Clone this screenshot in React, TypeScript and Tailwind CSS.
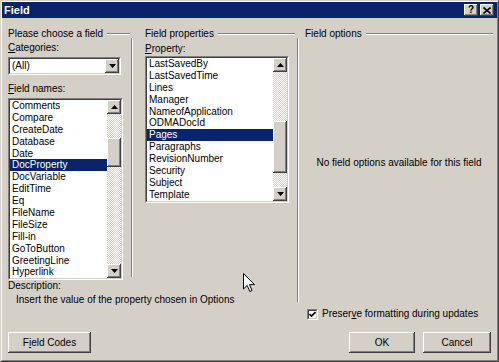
import React from 'react';

const fieldNames = [
    'Comments', 'Compare', 'CreateDate', 'Database', 'Date', 'DocProperty', 'DocVariable',
    'EditTime', 'Eq', 'FileName', 'FileSize', 'Fill-in', 'GoToButton', 'GreetingLine', 'Hyperlink',
];

const properties = [
    'LastSavedBy', 'LastSavedTime', 'Lines', 'Manager', 'NameofApplication', 'ODMADocId',
    'Pages', 'Paragraphs', 'RevisionNumber', 'Security', 'Subject', 'Template',
];

// classic raised 3D edge (buttons, scroll arrows, thumb)
const raised = 'bg-[#d4d0c8] shadow-[inset_-1px_-1px_0_#404040,inset_1px_1px_0_#ffffff,inset_-2px_-2px_0_#808080,inset_2px_2px_0_#d4d0c8]';

function Arrow({ dir }: { dir: 'up' | 'down' }) {
    return (
        <svg width="7" height="4" viewBox="0 0 7 4">
            {dir === 'up'
                ? <polygon points="3.5,0 7,4 0,4" fill="#000" />
                : <polygon points="0,0 7,0 3.5,4" fill="#000" />}
        </svg>
    );
}

function Sunken({ className, children }: { className?: string; children: React.ReactNode }) {
    return (
        <div className={`border border-t-[#808080] border-l-[#808080] border-r-white border-b-white ${className ?? ''}`}>
            <div className="h-full w-full border border-t-[#404040] border-l-[#404040] border-r-[#d4d0c8] border-b-[#d4d0c8] bg-white">
                {children}
            </div>
        </div>
    );
}

function ScrollBar({ before, thumb }: { before: number; thumb: number }) {
    return (
        <div className="flex h-full w-[14px] shrink-0 flex-col">
            <div className={`flex h-[14px] shrink-0 items-center justify-center ${raised}`}>
                <Arrow dir="up" />
            </div>
            <div className="flex flex-1 flex-col bg-[repeating-conic-gradient(#ffffff_0%_25%,#d4d0c8_0%_50%)] bg-[length:2px_2px]">
                <div className="shrink-0" style={{ height: before }} />
                <div className={`shrink-0 ${raised}`} style={{ height: thumb }} />
            </div>
            <div className={`flex h-[14px] shrink-0 items-center justify-center ${raised}`}>
                <Arrow dir="down" />
            </div>
        </div>
    );
}

function ListBox({ items, selected, className, before, thumb }: {
    items: string[]; selected: string; className: string; before: number; thumb: number;
}) {
    return (
        <Sunken className={className}>
            <div className="flex h-full overflow-hidden">
                <div className="flex-1 overflow-hidden">
                    {items.map((it) => (
                        <div
                            key={it}
                            className={`h-[11.9px] whitespace-nowrap pl-[2px] leading-[11.9px] ${it === selected ? 'bg-[#0a246a] text-white' : ''}`}
                        >
                            {it}
                        </div>
                    ))}
                </div>
                <ScrollBar before={before} thumb={thumb} />
            </div>
        </Sunken>
    );
}

function GroupHeader({ title, className }: { title: string; className?: string }) {
    return (
        <div className={`flex h-[12px] shrink-0 items-center ${className ?? ''}`}>
            <span className="leading-[12px]">{title}</span>
            <div className="ml-[4px] h-0 flex-1 border-t border-b border-t-[#808080] border-b-white" />
        </div>
    );
}

function VLine({ className }: { className?: string }) {
    return <div className={`w-[2px] shrink-0 border-l border-r border-l-[#808080] border-r-white ${className ?? ''}`} />;
}

function PushButton({ className, children }: { className: string; children: React.ReactNode }) {
    return (
        <div className={`flex h-[21px] items-center justify-center ${raised} ${className}`}>
            {children}
        </div>
    );
}

export default function App() {
    return (
        <div className="relative h-[362px] w-[499px] overflow-hidden border border-t-[#d4d0c8] border-l-[#d4d0c8] border-r-[#404040] border-b-[#404040] bg-[#d4d0c8] font-['Liberation_Sans',Arial,sans-serif] text-[10px] text-black">
            <div className="h-full border border-t-white border-l-white border-r-[#808080] border-b-[#808080]">
                {/* Title bar */}
                <div className="flex h-[16px] items-center bg-[#0a246a] pl-[2px] pr-[3px]">
                    <span className="text-[11px] font-bold leading-[16px] text-white">Field</span>
                    <div className={`ml-auto flex h-[12px] w-[14px] items-center justify-center ${raised}`}>
                        <span className="text-[10px] font-bold leading-none">?</span>
                    </div>
                    <div className={`ml-[2px] flex h-[12px] w-[14px] items-center justify-center ${raised}`}>
                        <svg width="8" height="7" viewBox="0 0 8 7">
                            <path d="M0.5 0.5 L7.5 6.5 M7.5 0.5 L0.5 6.5" stroke="#000" strokeWidth="1.6" />
                        </svg>
                    </div>
                </div>

                <div className="flex flex-col pl-[6px] pr-[4px] pt-[10px]">
                    <div className="flex h-[292px]">
                        {/* Left: field chooser + properties + description */}
                        <div className="flex w-[289px] shrink-0 flex-col">
                            <div className="flex h-[252px]">
                                <div className="flex w-[125px] shrink-0 flex-col">
                                    <GroupHeader title="Please choose a field" className="mr-[3px]" />
                                    <div className="flex flex-1">
                                        <div className="flex w-[115px] shrink-0 flex-col">
                                            <div className="mt-[2px] h-[12px] leading-[12px]"><u>C</u>ategories:</div>
                                            <Sunken className="mt-[3px] h-[18px] w-[113px]">
                                                <div className="flex h-full items-center">
                                                    <span className="flex-1 pl-[2px] leading-[12px]">(All)</span>
                                                    <div className={`flex h-full w-[14px] items-center justify-center ${raised}`}>
                                                        <Arrow dir="down" />
                                                    </div>
                                                </div>
                                            </Sunken>
                                            <div className="mt-[8px] h-[12px] leading-[12px]"><u>F</u>ield names:</div>
                                            <ListBox items={fieldNames} selected="DocProperty" className="mt-[3px] h-[182px] w-[115px]" before={24} thumb={29} />
                                        </div>
                                        <div className="flex-1" />
                                        <VLine className="mt-[-2px] mb-[3px]" />
                                    </div>
                                </div>
                                <div className="flex w-[164px] shrink-0 flex-col pl-[12px]">
                                    <GroupHeader title="Field properties" className="mr-[2px]" />
                                    <div className="mt-[3px] h-[12px] leading-[12px]"><u>P</u>roperty:</div>
                                    <ListBox items={properties} selected="Pages" className="mt-[1px] h-[147px] w-[144px]" before={49} thumb={52} />
                                </div>
                            </div>
                            <div className="h-[12px] leading-[12px]">Description:</div>
                            <div className="mt-[2px] h-[12px] pl-[8px] leading-[12px]">Insert the value of the property chosen in Options</div>
                        </div>

                        <VLine className="mt-[10px] mb-[18px]" />

                        {/* Field options */}
                        <div className="flex flex-1 flex-col pl-[6px]">
                            <GroupHeader title="Field options" />
                            <div className="mt-[117px] h-[12px] text-center leading-[12px]">No field options available for this field</div>
                            <div className="mt-auto flex h-[12px] items-center pl-[2px]">
                                <Sunken className="h-[11px] w-[11px]">
                                    <svg width="7" height="7" viewBox="0 0 7 7" className="block">
                                        <path d="M0.5 3 L2.5 5 L6.5 1" stroke="#000" strokeWidth="1.6" fill="none" />
                                    </svg>
                                </Sunken>
                                <span className="ml-[4px] leading-[12px]">Preser<u>v</u>e formatting during updates</span>
                            </div>
                        </div>
                    </div>

                    {/* Buttons */}
                    <div className="mt-[12px] flex pr-[2px]">
                        <PushButton className="w-[83px]">F<u>i</u>eld Codes</PushButton>
                        <PushButton className="ml-auto w-[66px]">OK</PushButton>
                        <PushButton className="ml-[8px] w-[68px]">Cancel</PushButton>
                    </div>
                </div>
            </div>

            {/* mouse pointer */}
            <svg className="absolute left-[242px] top-[272px]" width="13" height="20" viewBox="0 0 13 20">
                <path d="M0.5 0.5 L0.5 16 L4.2 12.4 L6.8 18.5 L9 17.5 L6.5 11.6 L11.5 11.6 Z" fill="#fff" stroke="#000" strokeWidth="1" />
            </svg>
        </div>
    );
}
